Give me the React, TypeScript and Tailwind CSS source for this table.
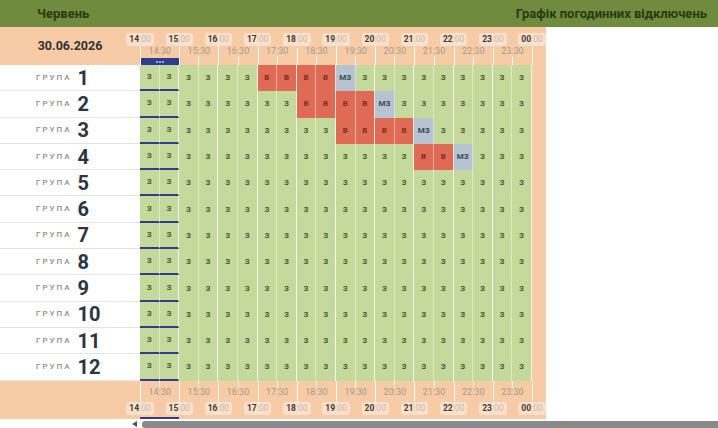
import React from "react";

const hours = ["14", "15", "16", "17", "18", "19", "20", "21", "22", "23"];

const outages: Record<number, { off: number[]; maybe: number }> = {
  1: { off: [6, 7, 8, 9], maybe: 10 },
  2: { off: [8, 9, 10, 11], maybe: 12 },
  3: { off: [10, 11, 12, 13], maybe: 14 },
  4: { off: [14, 15], maybe: 16 },
};

const HourTag = ({ h }: { h: string }) => (
  <div className="w-0 flex justify-center">
    <span className="inline-flex items-center h-[13px] px-[3px] rounded-[3px] bg-[#fbe0cb] text-[8.5px] leading-none whitespace-nowrap">
      <b className="text-[#3b3b3b]">{h}</b>
      <span className="text-[#c2bbb4]">:00</span>
    </span>
  </div>
);

const Dots = () => (
  <div className="h-[7px] w-full bg-[#2e3d8e] flex items-center justify-center gap-[1px]">
    <span className="w-[2px] h-[2px] rounded-full bg-[#c9d0ee]" />
    <span className="w-[2px] h-[2px] rounded-full bg-[#c9d0ee]" />
    <span className="w-[2px] h-[2px] rounded-full bg-[#c9d0ee]" />
  </div>
);

const Cell = ({ row, i }: { row: number; i: number }) => {
  const o = outages[row];
  let kind = "green";
  if (o && o.off.includes(i)) kind = "red";
  if (o && o.maybe === i) kind = "blue";
  const bg =
    kind === "red" ? "bg-[#e06b55] text-[#7d2d22]" : kind === "blue" ? "bg-[#b5c4d0] text-[#3c4a58]" : "bg-[#c6d99d] text-[#4f5c3b]";
  const edge = (i + 1) % 2 === 0 ? "border-r border-white/80" : "border-r border-white/45";
  const now = i < 2 ? "border-b-2 border-b-[#2e3d8e]" : "";
  return (
    <div className={`flex-1 flex items-center justify-center text-[8px] font-bold ${bg} ${edge} ${now}`}>
      {kind === "red" ? "В" : kind === "blue" ? "МЗ" : "З"}
    </div>
  );
};

export default function App() {
  const rows = Array.from({ length: 12 }, (_, k) => k + 1);
  return (
    <div className="w-[718px] h-[428px] overflow-hidden bg-white font-['Roboto',sans-serif]">
      <div className="h-[27px] bg-[#6f8b3e] flex items-center justify-between pl-[37px] pr-[11px] text-[13px] font-bold text-[#2b3912]">
        <span>Червень</span>
        <span>Графік погодинних відключень</span>
      </div>

      <div className="flex">
        <div className="w-[546px] bg-[#f7cba6] flex flex-col">
          {/* header */}
          <div className="flex h-[38px]">
            <div className="w-[140px] flex items-center justify-center text-[12.5px] font-bold text-[#333]">
              30.06.2026
            </div>
            <div className="w-[392px] flex">
              {hours.map((h, idx) => (
                <div key={h} className="flex-1 flex flex-col">
                  <div className="h-[19px] pt-[6px] flex">
                    <HourTag h={h} />
                  </div>
                  <div className="flex-1 flex flex-col border-l border-white">
                    <div className="self-center -ml-px text-[9px] leading-[11px] text-[#a39a90]">{h}:30</div>
                    {idx === 0 ? (
                      <div className="flex-1 flex flex-col justify-end">
                        <Dots />
                      </div>
                    ) : (
                      <div className="flex-1 flex justify-center -ml-px">
                        <div className="w-px bg-white" />
                      </div>
                    )}
                  </div>
                </div>
              ))}
              <div className="w-0 flex flex-col">
                <div className="h-[19px] pt-[6px] flex">
                  <HourTag h="00" />
                </div>
                <div className="flex-1 border-l border-white" />
              </div>
            </div>
          </div>

          {/* groups */}
          {rows.map((r) => (
            <div key={r} className="flex h-[26.3px]">
              <div className="w-[140px] bg-white border-b border-[#e4e4e4] flex items-center pl-[36px]">
                <span className="text-[8px] tracking-[2px] font-medium text-[#8c8c8c]">ГРУПА</span>
                <span className="ml-[6px] text-[20px] leading-none font-bold text-[#2d3440]">{r}</span>
              </div>
              <div className="w-[392px] flex">
                {Array.from({ length: 20 }, (_, i) => (
                  <Cell key={i} row={r} i={i} />
                ))}
              </div>
            </div>
          ))}

          {/* footer */}
          <div className="flex h-[38.4px]">
            <div className="w-[140px]" />
            <div className="w-[392px] flex">
              {hours.map((h, idx) => (
                <div key={h} className={`flex-1 flex flex-col ${idx === 0 ? "border-b-2 border-b-[#2e3d8e]" : ""}`}>
                  <div className="h-[21px] flex flex-col border-l border-white">
                    <div className="self-center -ml-px h-[6px] w-px bg-white" />
                    <div className="self-center -ml-px text-[9px] leading-[11px] text-[#a39a90]">{h}:30</div>
                  </div>
                  <div className="flex">
                    <HourTag h={h} />
                  </div>
                </div>
              ))}
              <div className="w-0 flex flex-col">
                <div className="h-[21px] border-l border-white" />
                <div className="flex">
                  <HourTag h="00" />
                </div>
              </div>
            </div>
          </div>
        </div>
        <div className="flex-1" />
      </div>

      {/* scrollbar */}
      <div className="mt-[2px] h-[7px] flex items-center">
        <div className="w-[142px] flex justify-end pr-[5px]">
          <svg width="5" height="6" viewBox="0 0 5 6">
            <path d="M5 0 L0 3 L5 6 Z" fill="#555" />
          </svg>
        </div>
        <div className="flex-1 h-[7px] bg-[#8a8a8a] rounded-l-[3px]" />
      </div>
    </div>
  );
}
